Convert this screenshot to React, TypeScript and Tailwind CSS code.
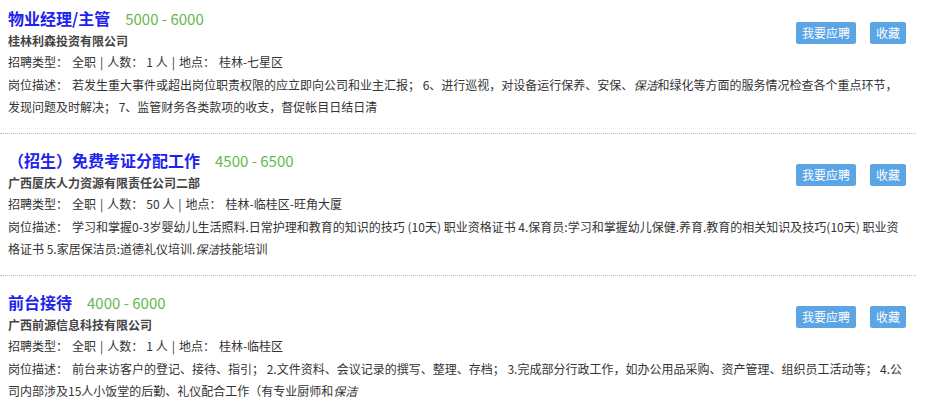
import React from "react";

type Job = {
  title: string;
  salary: string;
  company: string;
  info: [string, string, string];
  desc: React.ReactNode[];
};

const I = ({ children }: { children: React.ReactNode }) => (
  <em className="italic">{children}</em>
);

const jobs: Job[] = [
  {
    title: "物业经理/主管",
    salary: "5000 - 6000",
    company: "桂林利森投资有限公司",
    info: ["全职", "1 人", "桂林-七星区"],
    desc: [
      <>
        若发生重大事件或超出岗位职责权限的应立即向公司和业主汇报； 6、进行巡视，对设备运行保养、安保、<I>保洁</I>和绿化等方面的服务情况检查各个重点环节，
      </>,
      <>发现问题及时解决； 7、监管财务各类款项的收支，督促帐目日结日清</>,
    ],
  },
  {
    title: "（招生）免费考证分配工作",
    salary: "4500 - 6500",
    company: "广西厦庆人力资源有限责任公司二部",
    info: ["全职", "50 人", "桂林-临桂区-旺角大厦"],
    desc: [
      <>
        学习和掌握0-3岁婴幼儿生活照料.日常护理和教育的知识的技巧 (10天) 职业资格证书 4.保育员:学习和掌握幼儿保健.养育.教育的相关知识及技巧(10天) 职业资
      </>,
      <>
        格证书 5.家居保洁员:道德礼仪培训.<I>保洁</I>技能培训
      </>,
    ],
  },
  {
    title: "前台接待",
    salary: "4000 - 6000",
    company: "广西前源信息科技有限公司",
    info: ["全职", "1 人", "桂林-临桂区"],
    desc: [
      <>
        前台来访客户的登记、接待、指引； 2.文件资料、会议记录的撰写、整理、存档； 3.完成部分行政工作，如办公用品采购、资产管理、组织员工活动等； 4.公
      </>,
      <>
        司内部涉及15人小饭堂的后勤、礼仪配合工作（有专业厨师和<I>保洁</I>
      </>,
    ],
  },
];

function JobItem({ job, first }: { job: Job; first: boolean }) {
  return (
    <div
      className={`w-[916px] border-b border-dotted border-[#bbbbbb] pl-[8px] pr-[10px] pb-[15px] ${
        first ? "pt-[5px]" : "pt-[13px]"
      }`}
    >
      <div className="flex justify-between">
        <div>
          <div className="flex items-baseline h-[26px] leading-[26px]">
            <span className="text-[16px] font-bold text-[#2121ee]">{job.title}</span>
            <span className="ml-[15px] text-[15px] text-[#62b84f]">{job.salary}</span>
          </div>
          <div className="h-[20px] leading-[20px] text-[12px] font-bold text-[#444]">
            {job.company}
          </div>
          <div className="h-[22px] leading-[22px] text-[12px] text-[#333] whitespace-nowrap">
            <span>招聘类型：</span>
            <span className="ml-[4px]">{job.info[0]}</span>
            <span className="mx-[4px]">|</span>
            <span>人数：</span>
            <span className="ml-[3px]">{job.info[1]}</span>
            <span className="mx-[4px]">|</span>
            <span>地点：</span>
            <span className="ml-[4px]">{job.info[2]}</span>
          </div>
        </div>
        <div className="flex items-start gap-[14px] pt-[17px]">
          <button className="h-[22px] px-[6px] rounded-[2px] bg-[#5ba5e4] text-white text-[12px] leading-[22px]">
            我要应聘
          </button>
          <button className="h-[22px] px-[6px] rounded-[2px] bg-[#5ba5e4] text-white text-[12px] leading-[22px]">
            收藏
          </button>
        </div>
      </div>
      <div className="mt-[1px] text-[12px] leading-[22px] text-[#333]">
        {job.desc.map((line, i) => (
          <div key={i} className="whitespace-nowrap">
            {i === 0 && <span className="mr-[4px]">岗位描述：</span>}
            {line}
          </div>
        ))}
      </div>
    </div>
  );
}

export default function App() {
  return (
    <div
      className="w-[927px] h-[407px] overflow-hidden bg-white"
      style={{ fontFamily: '"Noto Sans CJK SC", "Noto Sans", sans-serif' }}
    >
      {jobs.map((j, i) => (
        <JobItem key={i} job={j} first={i === 0} />
      ))}
    </div>
  );
}
